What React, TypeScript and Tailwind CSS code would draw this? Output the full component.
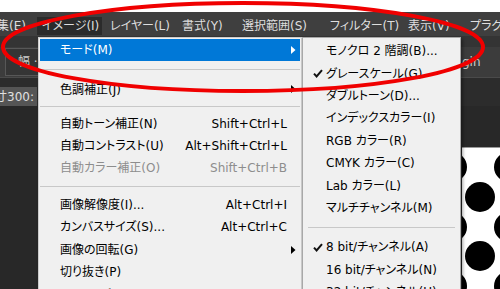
import React from "react";

type Item =
  | { sep: true; h: string }
  | {
      sep?: false;
      t: string;
      sc?: string;
      arrow?: boolean;
      hl?: boolean;
      dis?: boolean;
      check?: boolean;
    };

const mainItems: Item[] = [
  { t: "モード(M)", hl: true, arrow: true },
  { sep: true, h: "h-[17px]" },
  { t: "色調補正(J)", arrow: true },
  { sep: true, h: "h-[11.6px]" },
  { t: "自動トーン補正(N)", sc: "Shift+Ctrl+L" },
  { t: "自動コントラスト(U)", sc: "Alt+Shift+Ctrl+L" },
  { t: "自動カラー補正(O)", sc: "Shift+Ctrl+B", dis: true },
  { sep: true, h: "h-[14.3px]" },
  { t: "画像解像度(I)...", sc: "Alt+Ctrl+I" },
  { t: "カンバスサイズ(S)...", sc: "Alt+Ctrl+C" },
  { t: "画像の回転(G)", arrow: true },
  { t: "切り抜き(P)" },
  { t: "トリミング(R)..." },
];

const subItems: Item[] = [
  { t: "モノクロ 2 階調(B)..." },
  { t: "グレースケール(G)", check: true },
  { t: "ダブルトーン(D)..." },
  { t: "インデックスカラー(I)" },
  { t: "RGB カラー(R)" },
  { t: "CMYK カラー(C)" },
  { t: "Lab カラー(L)" },
  { t: "マルチチャンネル(M)" },
  { sep: true, h: "h-[17px]" },
  { t: "8 bit/チャンネル(A)", check: true },
  { t: "16 bit/チャンネル(N)" },
  { t: "32 bit/チャンネル(U)" },
];

function Arrow({ white }: { white?: boolean }) {
  return (
    <svg width="5" height="8" viewBox="0 0 5 8" className="absolute right-[4px] top-[7px]">
      <path d="M0 0 L4.5 4 L0 8 Z" fill={white ? "#ffffff" : "#000000"} />
    </svg>
  );
}

function Check() {
  return (
    <svg width="10" height="9" viewBox="0 0 10 9" className="absolute left-[9px] top-[7px]">
      <path d="M1 4.6 L3.6 7.4 L9 1.2" fill="none" stroke="#111" strokeWidth="2" />
    </svg>
  );
}

function MainRow({ it }: { it: Item }) {
  if (it.sep) {
    return (
      <div className={`${it.h} flex items-center`}>
        <div className="h-px w-full bg-[#c8c8c8]" />
      </div>
    );
  }
  return (
    <div
      className={`relative h-[22.4px] flex items-center pl-[20px] pr-[13px] ${
        it.hl ? "bg-[#0078d7] text-white" : it.dis ? "text-[#8d8d8d]" : "text-black"
      }`}
    >
      <span>{it.t}</span>
      {it.sc && <span className="ml-auto">{it.sc}</span>}
      {it.arrow && <Arrow white={it.hl} />}
    </div>
  );
}

function SubRow({ it }: { it: Item }) {
  if (it.sep) {
    return (
      <div className={`${it.h} flex items-center px-[4px]`}>
        <div className="h-px w-full bg-[#c8c8c8]" />
      </div>
    );
  }
  return (
    <div className="relative h-[22.4px] flex items-center pl-[22px] text-black">
      {it.check && <Check />}
      <span>{it.t}</span>
    </div>
  );
}

const bar = [
  { t: "集(E)", w: "w-[46px]", hl: false },
  { t: "イメージ(I)", w: "w-[67px]", hl: true },
  { t: "レイヤー(L)", w: "w-[72px]", hl: false },
  { t: "書式(Y)", w: "w-[60px]", hl: false },
  { t: "選択範囲(S)", w: "w-[88px]", hl: false },
  { t: "フィルター(T)", w: "w-[78px]", hl: false },
  { t: "表示(V)", w: "w-[62px]", hl: false },
  { t: "プラグイン", w: "w-[60px]", hl: false },
];

export default function App() {
  return (
    <div className="relative w-[500px] h-[289px] overflow-hidden bg-[#282828] font-['DejaVu_Sans','Noto_Sans_CJK_JP',sans-serif] [font-feature-settings:'palt'] text-[12px] leading-none flex flex-col">
      <div className="h-[12px] bg-white shrink-0" />
      <div className="h-[24px] shrink-0 bg-[#3f3f3f] flex items-center text-[#dedede] whitespace-nowrap -ml-[9px]">
        {bar.map((b) => (
          <div key={b.t} className={`${b.w} shrink-0 h-[18px] mt-[4px] flex`}>
            <div
              className={`h-[18px] flex items-center ${b.hl ? "w-[65px] bg-[#2b2b2b] pl-[5px]" : "pl-[6px]"}`}
            >
              {b.t}
            </div>
          </div>
        ))}
      </div>
      <div className="h-[11px] shrink-0 bg-[#343434]" />
      <div className="h-[31px] shrink-0 bg-[#3c3c3c] flex items-center border-b border-[#4a4a4a]">
        <div className="ml-[5px] h-[28px] w-[60px] border border-[#575757] bg-[#353535] flex items-center pl-[12px] text-[#cfcfcf]">
          幅 ·
        </div>
        <div className="ml-auto w-[38px] text-[#cfcfcf]">gin</div>
      </div>
      <div className="h-[9px] shrink-0 bg-[#2c2c2c]" />
      <div className="h-[19px] shrink-0 flex bg-[#2c2c2c]">
        <div className="w-[37px] bg-[#555555] text-[#e0e0e0] flex items-center overflow-hidden whitespace-nowrap">
          <span className="-ml-[5px]">寸300:</span>
        </div>
      </div>
      <div className="flex-1 flex">
        <div className="ml-auto w-[38px] mt-[41px] border-t border-[#9a9a9a] bg-white">
          <svg width="38" height="150" viewBox="462 149 38 150">
            <circle cx="480" cy="198" r="15" fill="#000" />
            <circle cx="480" cy="257" r="15" fill="#000" />
            <circle cx="452" cy="168" r="15" fill="#000" />
            <circle cx="509" cy="168" r="15" fill="#000" />
            <circle cx="452" cy="228" r="15" fill="#000" />
            <circle cx="509" cy="228" r="15" fill="#000" />
            <circle cx="452" cy="287" r="15" fill="#000" />
            <circle cx="509" cy="287" r="15" fill="#000" />
          </svg>
        </div>
      </div>

      {/* main dropdown */}
      <div className="absolute left-[38px] top-[37px] w-[264px] h-[270px] bg-[#f0f0f0] border border-[#cccccc] p-px shadow-[2px_2px_3px_rgba(0,0,0,0.35)]">
        {mainItems.map((it, i) => (
          <MainRow key={i} it={it} />
        ))}
      </div>

      {/* submenu */}
      <div className="absolute left-[302px] top-[37px] w-[159px] h-[270px] bg-[#f0f0f0] border border-[#a8a8a8] px-px pt-[2px] shadow-[2px_2px_3px_rgba(0,0,0,0.35)]">
        {subItems.map((it, i) => (
          <SubRow key={i} it={it} />
        ))}
      </div>

      {/* red ellipse annotation */}
      <svg className="absolute left-0 top-0 pointer-events-none" width="500" height="289" viewBox="0 0 500 289">
        <ellipse cx="243" cy="47" rx="240" ry="44" fill="none" stroke="#f00000" strokeWidth="4" />
      </svg>
    </div>
  );
}
